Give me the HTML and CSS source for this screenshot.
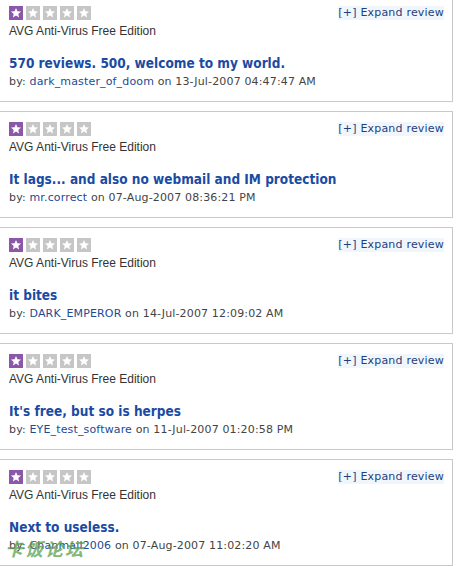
FILE: index.html
```html
<!DOCTYPE html>
<html>
<head>
<meta charset="utf-8">
<link rel="stylesheet" href="styles.css">
</head>
<body>
<div class="list">
  <div class="card">
    <div class="top">
      <div class="stars">
        <span class="star on"><svg viewBox="0 0 14 14"><polygon points="7,2 8.4,5.3 12,5.6 9.3,7.9 10.1,11.5 7,9.6 3.9,11.5 4.7,7.9 2,5.6 5.6,5.3"/></svg></span>
        <span class="star"><svg viewBox="0 0 14 14"><polygon points="7,2 8.4,5.3 12,5.6 9.3,7.9 10.1,11.5 7,9.6 3.9,11.5 4.7,7.9 2,5.6 5.6,5.3"/></svg></span>
        <span class="star"><svg viewBox="0 0 14 14"><polygon points="7,2 8.4,5.3 12,5.6 9.3,7.9 10.1,11.5 7,9.6 3.9,11.5 4.7,7.9 2,5.6 5.6,5.3"/></svg></span>
        <span class="star"><svg viewBox="0 0 14 14"><polygon points="7,2 8.4,5.3 12,5.6 9.3,7.9 10.1,11.5 7,9.6 3.9,11.5 4.7,7.9 2,5.6 5.6,5.3"/></svg></span>
        <span class="star"><svg viewBox="0 0 14 14"><polygon points="7,2 8.4,5.3 12,5.6 9.3,7.9 10.1,11.5 7,9.6 3.9,11.5 4.7,7.9 2,5.6 5.6,5.3"/></svg></span>
      </div>
      <a class="expand">[+] Expand review</a>
    </div>
    <div class="product">AVG Anti-Virus Free Edition</div>
    <div class="title">570 reviews. 500, welcome to my world.</div>
    <div class="by">by: <a class="user">dark_master_of_doom</a> on 13-Jul-2007 04:47:47 AM</div>
  </div>

  <div class="card">
    <div class="top">
      <div class="stars">
        <span class="star on"><svg viewBox="0 0 14 14"><polygon points="7,2 8.4,5.3 12,5.6 9.3,7.9 10.1,11.5 7,9.6 3.9,11.5 4.7,7.9 2,5.6 5.6,5.3"/></svg></span>
        <span class="star"><svg viewBox="0 0 14 14"><polygon points="7,2 8.4,5.3 12,5.6 9.3,7.9 10.1,11.5 7,9.6 3.9,11.5 4.7,7.9 2,5.6 5.6,5.3"/></svg></span>
        <span class="star"><svg viewBox="0 0 14 14"><polygon points="7,2 8.4,5.3 12,5.6 9.3,7.9 10.1,11.5 7,9.6 3.9,11.5 4.7,7.9 2,5.6 5.6,5.3"/></svg></span>
        <span class="star"><svg viewBox="0 0 14 14"><polygon points="7,2 8.4,5.3 12,5.6 9.3,7.9 10.1,11.5 7,9.6 3.9,11.5 4.7,7.9 2,5.6 5.6,5.3"/></svg></span>
        <span class="star"><svg viewBox="0 0 14 14"><polygon points="7,2 8.4,5.3 12,5.6 9.3,7.9 10.1,11.5 7,9.6 3.9,11.5 4.7,7.9 2,5.6 5.6,5.3"/></svg></span>
      </div>
      <a class="expand">[+] Expand review</a>
    </div>
    <div class="product">AVG Anti-Virus Free Edition</div>
    <div class="title">It lags... and also no webmail and IM protection</div>
    <div class="by">by: <a class="user">mr.correct</a> on 07-Aug-2007 08:36:21 PM</div>
  </div>

  <div class="card">
    <div class="top">
      <div class="stars">
        <span class="star on"><svg viewBox="0 0 14 14"><polygon points="7,2 8.4,5.3 12,5.6 9.3,7.9 10.1,11.5 7,9.6 3.9,11.5 4.7,7.9 2,5.6 5.6,5.3"/></svg></span>
        <span class="star"><svg viewBox="0 0 14 14"><polygon points="7,2 8.4,5.3 12,5.6 9.3,7.9 10.1,11.5 7,9.6 3.9,11.5 4.7,7.9 2,5.6 5.6,5.3"/></svg></span>
        <span class="star"><svg viewBox="0 0 14 14"><polygon points="7,2 8.4,5.3 12,5.6 9.3,7.9 10.1,11.5 7,9.6 3.9,11.5 4.7,7.9 2,5.6 5.6,5.3"/></svg></span>
        <span class="star"><svg viewBox="0 0 14 14"><polygon points="7,2 8.4,5.3 12,5.6 9.3,7.9 10.1,11.5 7,9.6 3.9,11.5 4.7,7.9 2,5.6 5.6,5.3"/></svg></span>
        <span class="star"><svg viewBox="0 0 14 14"><polygon points="7,2 8.4,5.3 12,5.6 9.3,7.9 10.1,11.5 7,9.6 3.9,11.5 4.7,7.9 2,5.6 5.6,5.3"/></svg></span>
      </div>
      <a class="expand">[+] Expand review</a>
    </div>
    <div class="product">AVG Anti-Virus Free Edition</div>
    <div class="title">it bites</div>
    <div class="by">by: <a class="user">DARK_EMPEROR</a> on 14-Jul-2007 12:09:02 AM</div>
  </div>

  <div class="card">
    <div class="top">
      <div class="stars">
        <span class="star on"><svg viewBox="0 0 14 14"><polygon points="7,2 8.4,5.3 12,5.6 9.3,7.9 10.1,11.5 7,9.6 3.9,11.5 4.7,7.9 2,5.6 5.6,5.3"/></svg></span>
        <span class="star"><svg viewBox="0 0 14 14"><polygon points="7,2 8.4,5.3 12,5.6 9.3,7.9 10.1,11.5 7,9.6 3.9,11.5 4.7,7.9 2,5.6 5.6,5.3"/></svg></span>
        <span class="star"><svg viewBox="0 0 14 14"><polygon points="7,2 8.4,5.3 12,5.6 9.3,7.9 10.1,11.5 7,9.6 3.9,11.5 4.7,7.9 2,5.6 5.6,5.3"/></svg></span>
        <span class="star"><svg viewBox="0 0 14 14"><polygon points="7,2 8.4,5.3 12,5.6 9.3,7.9 10.1,11.5 7,9.6 3.9,11.5 4.7,7.9 2,5.6 5.6,5.3"/></svg></span>
        <span class="star"><svg viewBox="0 0 14 14"><polygon points="7,2 8.4,5.3 12,5.6 9.3,7.9 10.1,11.5 7,9.6 3.9,11.5 4.7,7.9 2,5.6 5.6,5.3"/></svg></span>
      </div>
      <a class="expand">[+] Expand review</a>
    </div>
    <div class="product">AVG Anti-Virus Free Edition</div>
    <div class="title">It's free, but so is herpes</div>
    <div class="by">by: <a class="user">EYE_test_software</a> on 11-Jul-2007 01:20:58 PM</div>
  </div>

  <div class="card">
    <div class="top">
      <div class="stars">
        <span class="star on"><svg viewBox="0 0 14 14"><polygon points="7,2 8.4,5.3 12,5.6 9.3,7.9 10.1,11.5 7,9.6 3.9,11.5 4.7,7.9 2,5.6 5.6,5.3"/></svg></span>
        <span class="star"><svg viewBox="0 0 14 14"><polygon points="7,2 8.4,5.3 12,5.6 9.3,7.9 10.1,11.5 7,9.6 3.9,11.5 4.7,7.9 2,5.6 5.6,5.3"/></svg></span>
        <span class="star"><svg viewBox="0 0 14 14"><polygon points="7,2 8.4,5.3 12,5.6 9.3,7.9 10.1,11.5 7,9.6 3.9,11.5 4.7,7.9 2,5.6 5.6,5.3"/></svg></span>
        <span class="star"><svg viewBox="0 0 14 14"><polygon points="7,2 8.4,5.3 12,5.6 9.3,7.9 10.1,11.5 7,9.6 3.9,11.5 4.7,7.9 2,5.6 5.6,5.3"/></svg></span>
        <span class="star"><svg viewBox="0 0 14 14"><polygon points="7,2 8.4,5.3 12,5.6 9.3,7.9 10.1,11.5 7,9.6 3.9,11.5 4.7,7.9 2,5.6 5.6,5.3"/></svg></span>
      </div>
      <a class="expand">[+] Expand review</a>
    </div>
    <div class="product">AVG Anti-Virus Free Edition</div>
    <div class="title">Next to useless.</div>
    <div class="by">by: <a class="user">Chanmail2006</a> on 07-Aug-2007 11:02:20 AM</div>
  </div>
</div>
<div class="watermark">卡饭论坛</div>
</body>
</html>
```

FILE: styles.css
```css
html, body {
  margin: 0;
  padding: 0;
  background: #ffffff;
  overflow: hidden;
}

body {
  width: 456px;
  height: 566px;
  position: relative;
  font-family: "DejaVu Sans", Verdana, sans-serif;
}

.list {
  margin-top: -5px;
  width: 453px;
}

.card {
  border-top: 1px solid #c9c9c9;
  border-bottom: 1px solid #c9c9c9;
  border-right: 1px solid #c9c9c9;
  padding: 10px 8px 12px 9px;
  margin-bottom: 9px;
}

.top {
  display: flex;
  justify-content: space-between;
  align-items: center;
  height: 14px;
}

.stars {
  display: flex;
  gap: 3px;
}

.star {
  display: block;
  width: 14px;
  height: 14px;
  background: #c6c6c6;
}

.star.on {
  background: #8b57a8;
}

.star svg {
  display: block;
  width: 14px;
  height: 14px;
  fill: #ffffff;
}

.expand {
  font-size: 11px;
  color: #1e3f7e;
  background: #f1f6fc;
  letter-spacing: 0.2px;
  line-height: 14px;
}

.product {
  margin-top: 4px;
  font-family: "Liberation Sans", Arial, sans-serif;
  font-size: 12px;
  line-height: 15px;
  color: #333333;
}

.title {
  margin-top: 15px;
  font-family: "DejaVu Sans Condensed", "DejaVu Sans", Verdana, sans-serif;
  font-stretch: condensed;
  font-weight: bold;
  font-size: 13.5px;
  line-height: 18px;
  color: #1a4ba3;
}

.by {
  margin-top: 2px;
  font-size: 11px;
  line-height: 15px;
  letter-spacing: 0.15px;
  color: #444444;
}

.user {
  color: #1d4a94;
}

.watermark {
  position: absolute;
  left: 5px;
  top: 537px;
  font-family: "Noto Sans CJK SC", sans-serif;
  font-size: 18px;
  line-height: 22px;
  font-weight: bold;
  color: #5aa048;
  opacity: 0.75;
  letter-spacing: 2px;
  font-style: italic;
}
```
